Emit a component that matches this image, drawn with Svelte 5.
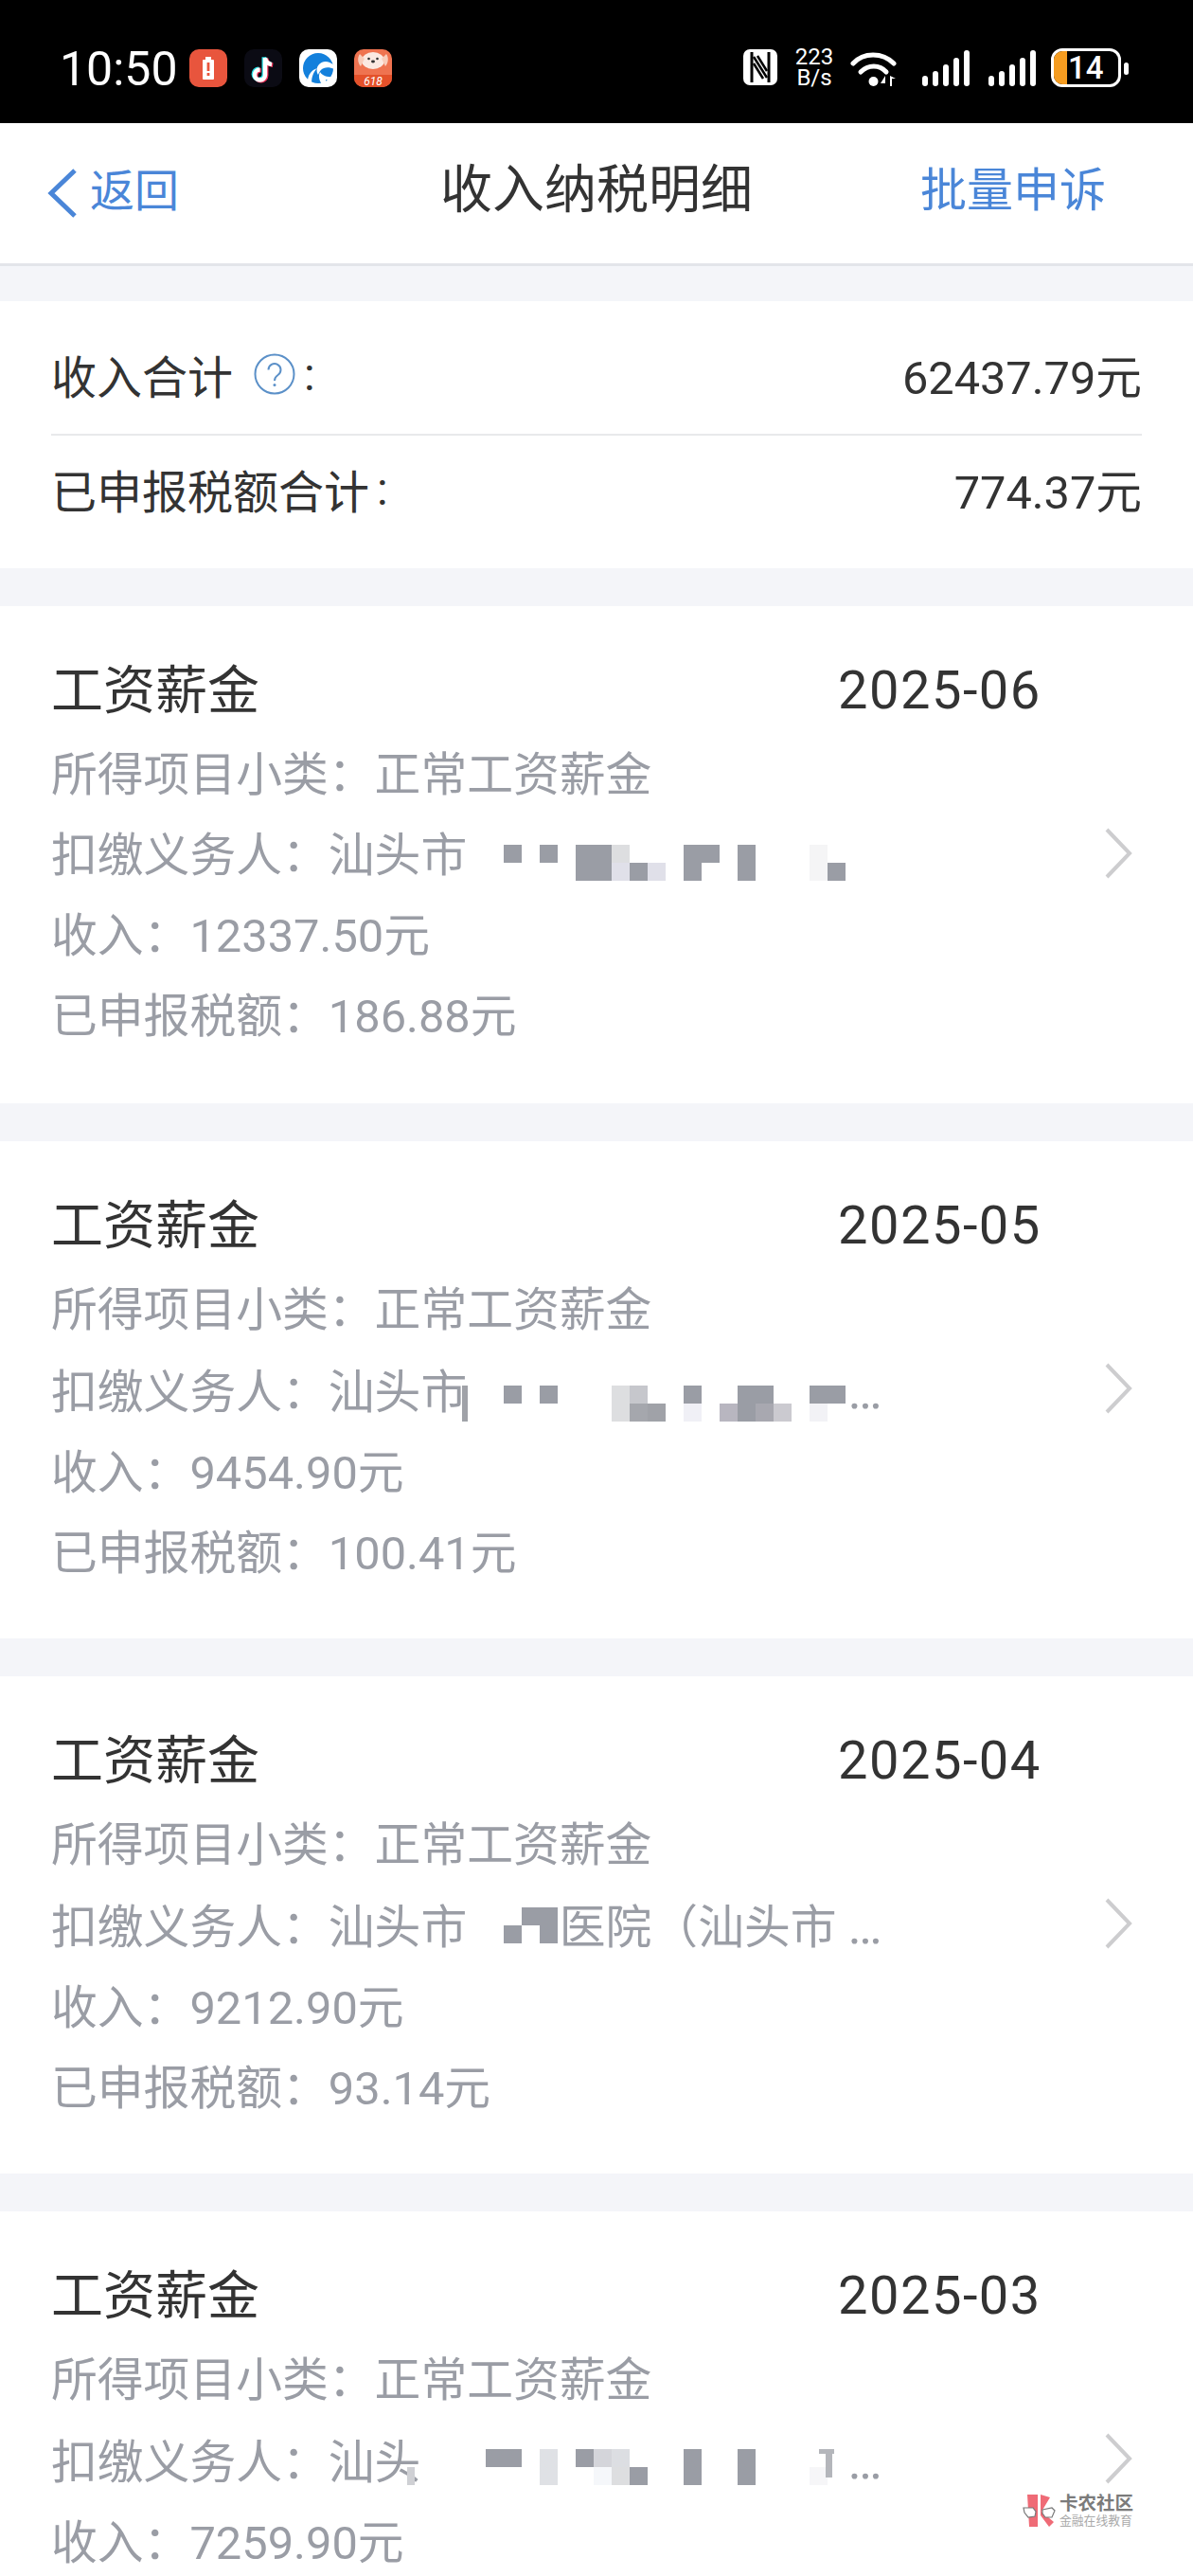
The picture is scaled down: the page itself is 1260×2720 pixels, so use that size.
<script>
  const D = '#9a9da5';
  const cards = [
    {
      period: '2025-06', payer: '扣缴义务人：汕头市', income: '12337.50元', tax: '186.88元', top: 31,
      cells: [
        [0,0,D],[2,0,D],[4,0,D],[5,0,D],[6,0,'#dddee0'],[10,0,D],[11,0,D],[13,0,D],[17,0,'#f5f5f6'],
        [4,1,D],[5,1,D],[6,1,'#e0e0e9'],[7,1,D],[8,1,'#e0e0e9'],[10,1,D],[13,1,D],[17,1,'#f5f5f6'],[18,1,D]
      ]
    },
    {
      period: '2025-05', payer: '扣缴义务人：汕头市　　　　　　　　', more: true, income: '9454.90元', tax: '100.41元', top: 37,
      cells: [
        [0,0,D],[2,0,D],[6,0,'#dddee0'],[7,0,'#c6c7cc'],[10,0,D],[13,0,D],[14,0,D],[17,0,D],[18,0,D],
        [6,1,'#dddee0'],[7,1,'#a5a7ad'],[8,1,'#a0a2a8'],[10,1,'#f0f0f6'],[12,1,'#b8b6c0'],[13,1,D],[14,1,'#a8a8b0'],[15,1,'#cbcad0'],[17,1,'#f2f2f6'],
        [-2.32,0,'#a0a2a8',6,38]
      ]
    },
    {
      period: '2025-04', payer: '扣缴义务人：汕头市　　医院（汕头市', more: true, income: '9212.90元', tax: '93.14元', top: 23,
      cells: [[1,0,D],[2,0,D],[0,1,D],[2,1,D]]
    },
    {
      period: '2025-03', payer: '扣缴义务人：汕头　　　　　　　　　', more: true, income: '7259.90元', tax: null, top: 30,
      cells: [
        [-1,0,D],[0,0,D],[2,0,'#dfe1e5'],[4,0,D],[5,0,'#d4d5da'],[6,0,'#dcdee2'],[10,0,D],[13,0,D],
        [2,1,'#dfe1e5'],[5,1,'#f5f7fa'],[6,1,'#dddee0'],[7,1,D],[10,1,D],[13,1,D],[17,1,'#f6f6f8'],
        [-5.37,1,'#cfd0d4',8,19],[17.5,0,'#b4b6bb',16,5],[17.9,0,'#b4b6bb',7,30]
      ]
    }
  ];
</script>

<div class="screen">
  <div class="status">
    <span class="time">10:50</span>
    <div class="apps">
      <svg width="40" height="40" viewBox="0 0 40 40">
        <rect width="40" height="40" rx="10" fill="#e8553d"/>
        <rect x="17" y="8" width="6" height="3" fill="#fff"/>
        <rect x="14" y="11" width="12" height="21" rx="1" fill="#fff"/>
        <rect x="18.600" y="14" width="2.800" height="9" fill="#e8553d"/>
        <rect x="18.600" y="25" width="2.800" height="3" fill="#e8553d"/>
      </svg>
      <svg width="40" height="40" viewBox="0 0 40 40">
        <rect width="40" height="40" rx="10" fill="#0b0b14"/>
        <path d="M22 9v18a5.500 5.500 0 1 1-5.500-5.500M22 9c.5 4 3.500 6.500 7 7" fill="none" stroke="#25e0e6" stroke-width="4.500" transform="translate(-1.200 -.8)"/>
        <path d="M22 9v18a5.500 5.500 0 1 1-5.500-5.500M22 9c.5 4 3.500 6.500 7 7" fill="none" stroke="#f0345c" stroke-width="4.500" transform="translate(1.200 .8)"/>
        <path d="M22 9v18a5.500 5.500 0 1 1-5.500-5.500M22 9c.5 4 3.500 6.500 7 7" fill="none" stroke="#fff" stroke-width="4.500"/>
      </svg>
      <svg width="40" height="40" viewBox="0 0 40 40">
        <rect width="40" height="40" rx="10" fill="#fff"/>
        <circle cx="20" cy="20" r="16" fill="#1380dc"/>
        <path d="M37 17c-6-5-12-5-16-1-3 3-3 8-1 11 1-3 3-6 6-7 3-1.500 7-1 11 1z" fill="#fff"/>
        <path d="M24 37c-3-4-4-9-2-13 2 3 6 6 14 5l-1 3c-3 .8-5 .6-7 0 0 2 .5 3.500 1 4.500z" fill="#fff"/>
        <path d="M13 36c0-7 2-12 6-16-6 2-10 7-10 14z" fill="#fff"/>
      </svg>
      <svg width="40" height="40" viewBox="0 0 40 40">
        <defs>
          <clipPath id="jd"><rect width="40" height="40" rx="10"/></clipPath>
        </defs>
        <g clip-path="url(#jd)">
          <rect width="40" height="40" fill="#ef7350"/>
          <ellipse cx="20" cy="12" rx="12" ry="9" fill="#fbe9e2"/>
          <path d="M6 5c-3 4-2 10 1 13l4-8zM34 5c3 4 2 10-1 13l-4-8z" fill="#f9cdbb"/>
          <circle cx="15.500" cy="10" r="1.300" fill="#333"/>
          <circle cx="24.500" cy="10" r="1.300" fill="#333"/>
          <ellipse cx="20" cy="13" rx="2" ry="1.400" fill="#333"/>
          <rect y="27" width="40" height="13" fill="#e4512a"/>
          <text x="20" y="38" class="jd618">618</text>
        </g>
      </svg>
    </div>
    <div class="sys">
      <svg class="nfc" width="36" height="38" viewBox="0 0 36 38">
        <rect width="36" height="38" rx="7" fill="#fff"/>
        <path d="M9 3v32M27 3v32" stroke="#000" stroke-width="3"/>
        <path d="M11 8l14 22M11 15l10 16M15 7l10 16" stroke="#000" stroke-width="2.500"/>
      </svg>
      <div class="speed"><span>223</span><span>B/s</span></div>
      <svg class="wifi" width="50" height="40" viewBox="0 0 50 40">
        <path d="M3 15C14 3 34 3 46 15" fill="none" stroke="#fff" stroke-width="5" stroke-linecap="round"/>
        <path d="M11 24c8-8 20-8 27 0" fill="none" stroke="#fff" stroke-width="5" stroke-linecap="round"/>
        <circle cx="24.500" cy="34" r="5" fill="#fff"/>
        <path d="M37 39V28l-5 8h5zM42 39V28l6 3h-4v8z" fill="#fff"/>
      </svg>
      {#each [0, 1] as n}
        <svg class="sig" width="50" height="40" viewBox="0 0 50 40">
          <g fill="#fff">
            <rect x="0" y="28" width="6" height="11" rx="3"/>
            <rect x="11" y="23" width="6" height="16" rx="3"/>
            <rect x="22" y="16" width="6" height="23" rx="3"/>
            <rect x="33" y="9" width="6" height="30" rx="3"/>
            <rect x="44" y="1" width="6" height="38" rx="3"/>
          </g>
        </svg>
      {/each}
      <div class="batt"><i class="fill"></i><b>14</b></div>
      <i class="nub"></i>
    </div>
  </div>

  <div class="nav">
    <div class="back">
      <svg width="32" height="54" viewBox="0 0 32 54">
        <path d="M29 3L4 27l25 24" fill="none" stroke="#4a86d8" stroke-width="5"/>
      </svg>
      <span>返回</span>
    </div>
    <div class="title">收入纳税明细</div>
    <div class="action">批量申诉</div>
  </div>

  <div class="summary">
    <div class="row first">
      <span class="label">收入合计<svg class="help" width="44" height="44" viewBox="0 0 44 44">
        <circle cx="22" cy="22" r="20.500" fill="none" stroke="#5b90c8" stroke-width="2"/>
        <path d="M15.500 17.500a6.500 6.500 0 1 1 10 5.500c-2.300 1.500-3.500 3-3.500 6" fill="none" stroke="#5b90c8" stroke-width="2"/>
        <circle cx="22" cy="33.500" r="1.500" fill="#5b90c8"/>
      </svg>:</span>
      <span class="value">62437.79元</span>
    </div>
    <div class="row second">
      <span class="label">已申报税额合计<span class="colon">:</span></span>
      <span class="value">774.37元</span>
    </div>
  </div>

  {#each cards as card}
    <div class="card">
      <div class="head">
        <span>工资薪金</span>
        <span class="period">{card.period}</span>
      </div>
      <div class="line">所得项目小类：正常工资薪金</div>
      <div class="line payer">
        {card.payer}{#if card.more}<span class="more">…</span>{/if}
        <div class="mosaic" style="top:{card.top}px">
          {#each card.cells as [col, row, color, w, h]}
            <i style="left:{col * 19}px;top:{row * 19}px;width:{w ?? 19}px;height:{h ?? 19}px;background:{color}"></i>
          {/each}
        </div>
        <svg class="chev" width="30" height="54" viewBox="0 0 30 54">
          <path d="M3 2l24 25L3 52" fill="none" stroke="#cdcdcf" stroke-width="4"/>
        </svg>
      </div>
      <div class="line">收入：{card.income}</div>
      {#if card.tax}<div class="line">已申报税额：{card.tax}</div>{/if}
    </div>
  {/each}

  <div class="mark">
    <svg width="36" height="36" viewBox="0 0 36 36">
      <path d="M5 1h11v34H7zM19 1l10 3-9 15 13 11-5 5-9-12z" fill="#ef6b76"/>
      <path d="M1 15l10 0 3 4-1 5-7 1-4-5zM21 17l10-2 3 3-3 7-7 0-3-4z" fill="#fff" stroke="#777" stroke-width="1.200"/>
    </svg>
    <div class="mark-text">
      <span class="mark-a">卡农社区</span>
      <span class="mark-b">金融在线教育</span>
    </div>
  </div>
</div>

<style>
  :global(body) {
    margin: 0;
  }

  .screen {
    position: relative;
    width: 1260px;
    height: 2720px;
    overflow: hidden;
    background: #f4f5f9;
    font-family: Roboto, "Noto Sans CJK SC", sans-serif;
    color: #333;
  }

  .status {
    display: flex;
    align-items: flex-start;
    height: 130px;
    background: #000;
    color: #fff;
    padding-left: 63px;
    box-sizing: border-box;
  }

  .time {
    font-size: 50px;
    line-height: 50px;
    margin-top: 48px;
    width: 137px;
  }

  .apps {
    display: flex;
    gap: 18px;
    margin-top: 52px;
  }

  .jd618 {
    font: italic 12px Roboto, sans-serif;
    fill: #fff;
    text-anchor: middle;
  }

  .sys {
    display: flex;
    align-items: flex-start;
    margin-left: auto;
    padding-right: 68px;
    margin-top: 52px;
  }

  .nfc {
    margin-right: 17px;
  }

  .speed {
    display: flex;
    flex-direction: column;
    align-items: center;
    width: 44px;
    margin-top: -3px;
    font-size: 24px;
    line-height: 22px;
    margin-right: 16px;
  }

  .wifi {
    margin-right: 26px;
  }

  .sig {
    margin-right: 20px;
  }

  .sig + .sig {
    margin-right: 16px;
  }

  .batt {
    position: relative;
    width: 74px;
    height: 41px;
    box-sizing: border-box;
    border: 3px solid #fff;
    border-radius: 12px;
    overflow: hidden;
    margin-top: -1px;
  }

  .fill {
    position: absolute;
    left: 0;
    top: 0;
    bottom: 0;
    width: 14px;
    background: #f59c20;
  }

  .batt b {
    position: absolute;
    left: 15px;
    top: 0;
    font-size: 33px;
    line-height: 35px;
    font-weight: 500;
  }

  .nub {
    width: 5px;
    height: 13px;
    border-radius: 3px;
    background: #fff;
    margin: 14px 0 0 3px;
  }

  .nav {
    display: grid;
    grid-template-columns: 1fr auto 1fr;
    align-items: center;
    height: 148px;
    background: #fff;
    border-bottom: 3px solid #e3e5ea;
    padding: 0 71px;
  }

  .back {
    display: flex;
    align-items: center;
    gap: 13px;
    margin-left: -21px;
    color: #4a86d8;
    font-size: 47px;
    line-height: 60px;
    padding-bottom: 5px;
  }

  .back svg {
    margin-top: 5px;
  }

  .title {
    font-size: 55px;
    line-height: 60px;
    padding-bottom: 8px;
  }

  .action {
    justify-self: end;
    margin-right: 21px;
    color: #4a86d8;
    font-size: 49px;
    line-height: 60px;
    padding-bottom: 4px;
  }

  .summary {
    margin-top: 37px;
    background: #fff;
    padding: 0 54px;
    height: 282px;
    box-sizing: border-box;
  }

  .row {
    display: flex;
    justify-content: space-between;
    align-items: center;
    height: 140px;
    font-size: 48px;
  }

  .row.first {
    height: 142px;
    padding-top: 14px;
    box-sizing: border-box;
    border-bottom: 2px solid #e8e9eb;
  }

  .row.second {
    box-sizing: border-box;
    padding-bottom: 28px;
  }

  .label {
    display: flex;
    align-items: center;
  }

  .value {
    font-size: 48.700px;
  }

  .colon {
    margin-left: 8px;
  }

  .help {
    margin: 0 9px 0 22px;
  }

  .card {
    margin-top: 40px;
    height: 525px;
    box-sizing: border-box;
    background: #fff;
    padding: 46px 0 0 54px;
  }

  .head {
    display: flex;
    font-size: 55px;
    line-height: 86px;
    margin-bottom: 4px;
  }

  .period {
    position: absolute;
    left: 885px;
    letter-spacing: 1.500px;
    font-size: 56px;
  }

  .line {
    position: relative;
    font-size: 48.800px;
    line-height: 85px;
    color: #9a9da5;
    white-space: pre;
  }

  .more {
    margin-left: 12px;
    font-size: 54px;
  }

  .mosaic {
    position: absolute;
    left: 478px;
    width: 0;
    height: 0;
  }

  .mosaic i {
    position: absolute;
    display: block;
  }

  .chev {
    position: absolute;
    left: 1112px;
    top: 13px;
  }

  .mark {
    position: absolute;
    left: 1080px;
    top: 2633px;
    display: flex;
    align-items: center;
    gap: 3px;
    background: rgba(255, 255, 255, 0.9);
  }

  .mark-text {
    display: flex;
    flex-direction: column;
  }

  .mark-a {
    font-size: 19.500px;
    line-height: 22px;
    font-weight: 700;
    color: #7b7b7b;
  }

  .mark-b {
    font-size: 12.800px;
    line-height: 14px;
    color: #aaa;
  }
</style>
